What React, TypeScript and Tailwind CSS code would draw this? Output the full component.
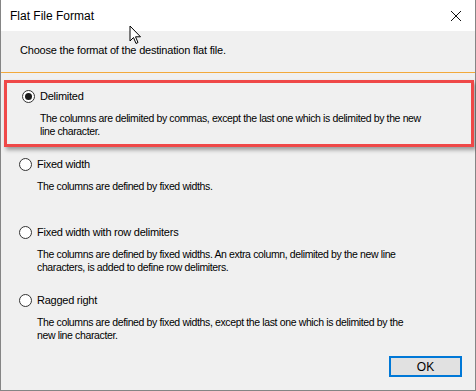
const font = { fontFamily: '"Liberation Sans", Arial, sans-serif' };

function Radio({ checked }: { checked?: boolean }) {
  return (
    <span className="flex h-[13px] w-[13px] shrink-0 items-center justify-center rounded-full border border-[#333] bg-white">
      {checked && <span className="h-[7px] w-[7px] rounded-full bg-[#1a1a1a]" />}
    </span>
  );
}

function Option({
  label,
  lines,
  checked,
}: {
  label: string;
  lines: string[];
  checked?: boolean;
}) {
  return (
    <div className="flex flex-col">
      <div className="flex h-[14px] items-center gap-[5px] pl-[18px]">
        <Radio checked={checked} />
        <span className="text-[11px] leading-[14px] tracking-[-0.25px]">{label}</span>
      </div>
      <div className="mt-[9px] whitespace-nowrap pl-[36px] text-[10.5px] leading-[13px] tracking-[-0.37px]">
        {lines.map((l) => (
          <div key={l}>{l}</div>
        ))}
      </div>
    </div>
  );
}

export default function App() {
  return (
    <div
      className="relative flex h-[391px] w-[476px] flex-col border-x border-b border-[#858585] text-[#000]"
      style={font}
    >
      <div className="flex h-[31px] shrink-0 items-center justify-between bg-white pl-[9px] pr-[10px]">
        <span className="text-[12px] text-black">Flat File Format</span>
        <svg width="12" height="12" viewBox="0 0 12 12" className="mr-[3px]">
          <path d="M1 1 L11 11 M11 1 L1 11" stroke="#111" strokeWidth="1" />
        </svg>
      </div>

      <div className="flex flex-1 flex-col bg-[#f0f0f0]">
        <div className="mt-[13px] pl-[19px] text-[11px] leading-[13px] tracking-[-0.2px]">
          Choose the format of the destination flat file.
        </div>
        <div className="mt-[15px] h-px bg-[#f2a93b]" />

        <div className="ml-[3px] mr-[1px] mt-[7px] h-[67px] border-[3px] border-[#ef4848] pt-[6px] shadow-[2px_3px_4px_rgba(0,0,0,0.35)]">
          <div className="-ml-[3px]">
            <Option
              checked
              label="Delimited"
              lines={[
                'The columns are delimited by commas, except the last one which is delimited by the new',
                'line character.',
              ]}
            />
          </div>
        </div>

        <div className="mt-[10px]">
          <Option label="Fixed width" lines={['The columns are defined by fixed widths.']} />
        </div>

        <div className="mt-[32px]">
          <Option
            label="Fixed width with row delimiters"
            lines={[
              'The columns are defined by fixed widths. An extra column, delimited by the new line',
              'characters, is added to define row delimiters.',
            ]}
          />
        </div>

        <div className="mt-[19px]">
          <Option
            label="Ragged right"
            lines={[
              'The columns are defined by fixed widths, except the last one which is delimited by the',
              'new line character.',
            ]}
          />
        </div>

        <div className="mt-[14px] flex justify-end pr-[13px]">
          <button className="h-[21px] w-[73px] border-2 border-[#0078d7] bg-[#e1e1e1] text-[12px] leading-none">
            OK
          </button>
        </div>
      </div>

      <svg
        className="absolute left-[128px] top-[25px]"
        width="14"
        height="21"
        viewBox="0 0 14 21"
      >
        <path
          d="M1 1 L1 16 L4.5 12.5 L7 18.5 L9 17.5 L6.5 11.8 L11.5 11.8 Z"
          fill="white"
          stroke="black"
          strokeWidth="1"
          strokeLinejoin="round"
        />
      </svg>
    </div>
  );
}
